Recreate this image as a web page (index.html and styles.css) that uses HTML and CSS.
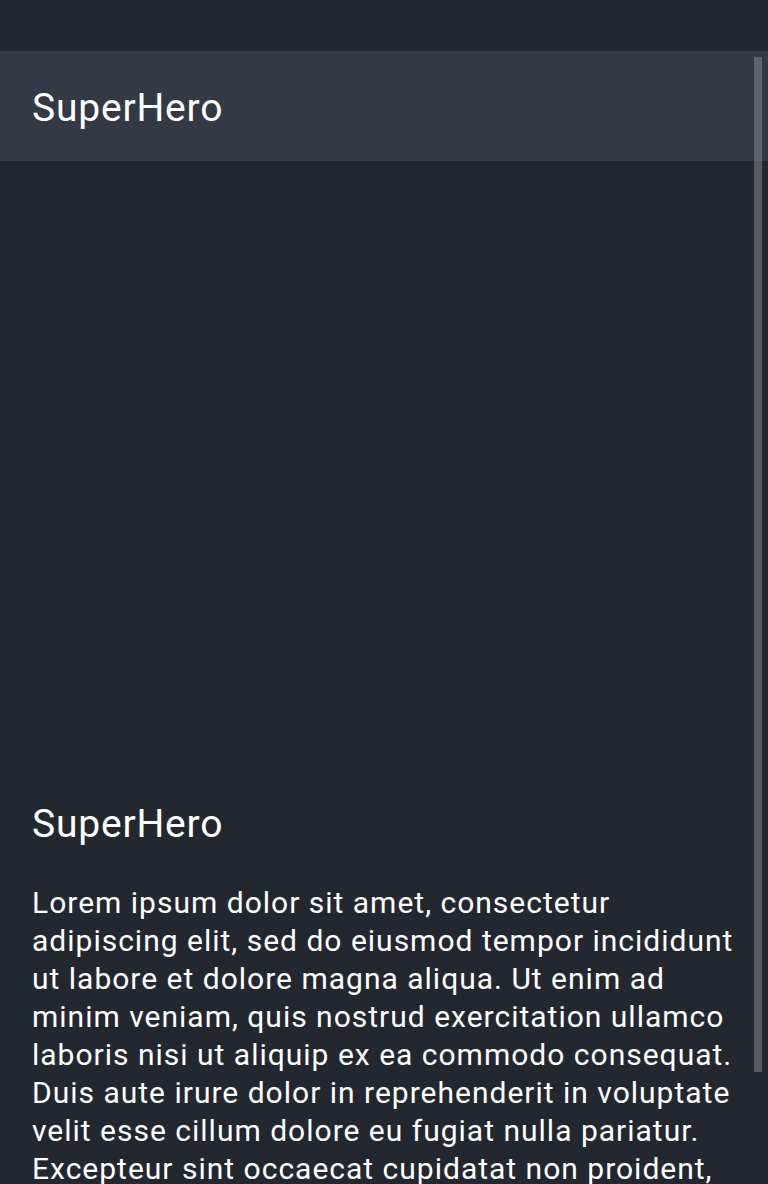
FILE: index.html
```html
<!DOCTYPE html>
<html>
<head>
<meta charset="utf-8">
<link rel="stylesheet" href="styles.css">
</head>
<body>
<div class="screen">
  <div class="status"></div>
  <header class="appbar"><h1 class="appbar-title">SuperHero</h1></header>
  <main class="content">
    <div class="hero-image"></div>
    <h2 class="hero-name">SuperHero</h2>
    <p class="hero-text">Lorem ipsum dolor sit amet, consectetur adipiscing elit, sed do eiusmod tempor incididunt ut labore et dolore magna aliqua. Ut enim ad minim veniam, quis nostrud exercitation ullamco laboris nisi ut aliquip ex ea commodo consequat. Duis aute irure dolor in reprehenderit in voluptate velit esse cillum dolore eu fugiat nulla pariatur. Excepteur sint occaecat cupidatat non proident, sunt in culpa qui officia deserunt mollit anim id est laborum.</p>
  </main>
  <div class="scrollbar"></div>
</div>
</body>
</html>
```
FILE: styles.css
```css
html, body {
  margin: 0;
  padding: 0;
  background: #232830;
}
.screen {
  position: relative;
  width: 768px;
  height: 1184px;
  overflow: hidden;
  background: #232830;
  font-family: Roboto, "Noto Sans", sans-serif;
  color: #ffffff;
}
.status {
  height: 51px;
  background: #222730;
}
.appbar {
  height: 110px;
  background: #333945;
  display: flex;
  align-items: center;
  padding: 0 32px;
}
.appbar-title {
  margin: 0;
  font-size: 39px;
  font-weight: 400;
  letter-spacing: 0.8px;
  line-height: 1;
  transform: translateY(2px);
}
.content {
  padding: 0 32px;
}
.hero-image {
  height: 639px;
}
.hero-name {
  margin: 0;
  font-size: 39px;
  font-weight: 400;
  letter-spacing: 0.8px;
  line-height: 48px;
}
.hero-text {
  margin: 36px 0 0;
  font-size: 30px;
  letter-spacing: 1px;
  line-height: 38px;
}
.scrollbar {
  position: absolute;
  left: 754px;
  top: 57px;
  width: 8px;
  height: 1015px;
  background: rgba(150, 150, 150, 0.45);
}
```
